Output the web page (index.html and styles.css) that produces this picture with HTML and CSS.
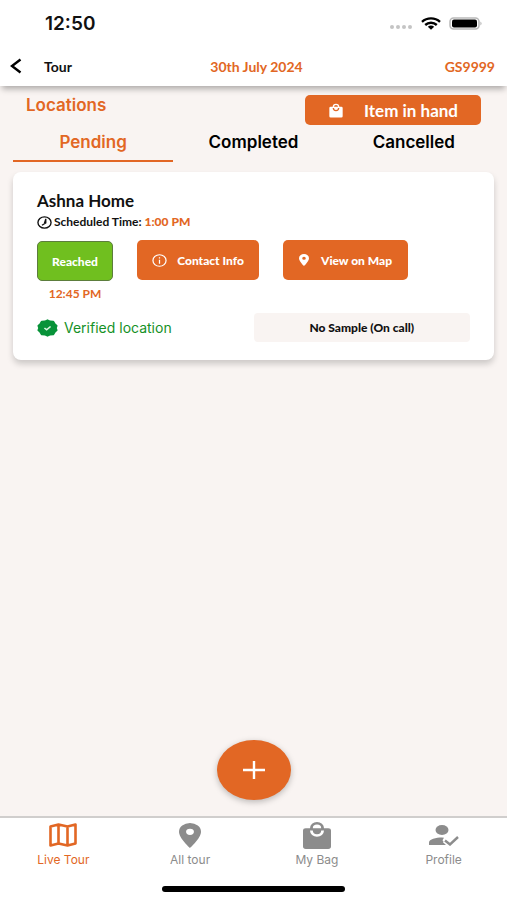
FILE: index.html
```html
<!DOCTYPE html>
<html lang="en">
<head>
    <meta charset="UTF-8">
    <meta name="viewport" content="width=device-width, initial-scale=1.0">
    <title>Tour</title>
    <link rel="stylesheet" href="styles.css">
</head>
<body>
    <div class="status-bar">
        <span class="clock">12:50</span>
        <div class="status-icons">
            <svg width="24" height="6" viewBox="0 0 24 6" fill="#c4c4c4">
                <circle cx="3" cy="3" r="2"/><circle cx="9" cy="3" r="2"/><circle cx="15" cy="3" r="2"/><circle cx="21" cy="3" r="2"/>
            </svg>
            <svg class="wifi" width="20" height="13" viewBox="0 0 20 13" fill="none" stroke="#000" stroke-width="2.4">
                <path d="M1 4.800C6 .2 14 .2 19 4.800M4.200 8C7.500 5 12.500 5 15.800 8"/>
                <path d="M6.800 9.700Q10 7.200 13.200 9.700L10 12.800z" fill="#000" stroke="none"/>
            </svg>
            <svg width="34" height="13" viewBox="0 0 34 13">
                <rect x="1" y="1" width="29" height="11" rx="3.500" fill="#fff" stroke="#b9b9b9" stroke-width="1.500"/>
                <rect x="3" y="2.500" width="25" height="8" rx="2" fill="#000"/>
                <path d="M31.500 4.500q2 2 0 4z" fill="#a5a5a5"/>
            </svg>
        </div>
    </div>

    <header class="header">
        <div class="header-left">
            <button class="back" aria-label="Back">
                <svg width="12" height="16" viewBox="0 0 12 16" fill="none" stroke="#000" stroke-width="2.400"><path d="M10.500 1.500L2 8l8.500 6.500"/></svg>
            </button>
            <h1>Tour</h1>
        </div>
        <span class="date">30th July 2024</span>
        <span class="code">GS9999</span>
    </header>

    <main>
        <div class="title-row">
            <h2>Locations</h2>
            <button class="btn item-btn">
                <svg width="16" height="15" viewBox="0 0 24 24" preserveAspectRatio="none" fill="#fff"><path d="M20 6h-3a5 5 0 0 0-10 0H4a2 2 0 0 0-2 2v13a2 2 0 0 0 2 2h16a2 2 0 0 0 2-2V8a2 2 0 0 0-2-2zm-8-3a3 3 0 0 1 3 3H9a3 3 0 0 1 3-3zm0 10a5 5 0 0 1-5-5h2a3 3 0 0 0 6 0h2a5 5 0 0 1-5 5z"/></svg>
                Item in hand
            </button>
        </div>

        <div class="tabs">
            <button class="tab active">Pending</button>
            <button class="tab">Completed</button>
            <button class="tab">Cancelled</button>
        </div>

        <section class="card">
            <h3>Ashna Home</h3>
            <p class="schedule">
                <svg width="15" height="13" viewBox="0 0 24 24" preserveAspectRatio="none" fill="none" stroke="#111" stroke-width="2.200"><circle cx="12" cy="12" r="10.500"/><path d="M14 5v8l-6 4M14 6l-2 7"/></svg>
                <span>Scheduled Time: <b>1:00 PM</b></span>
            </p>
            <div class="actions">
                <div class="reached">
                    <button class="btn reached-btn">Reached</button>
                    <span>12:45 PM</span>
                </div>
                <button class="btn contact-btn">
                    <svg width="15" height="13" viewBox="0 0 24 24" preserveAspectRatio="none" fill="none" stroke="#fff" stroke-width="2"><circle cx="12" cy="12" r="10.500"/><path d="M12 10.500V18M12 6v2.500"/></svg>
                    Contact Info
                </button>
                <button class="btn map-btn">
                    <svg width="10" height="12" viewBox="5 2 14 20" preserveAspectRatio="none" fill="#fff"><path d="M12 2a7 7 0 0 0-7 7c0 5.250 7 13 7 13s7-7.750 7-13a7 7 0 0 0-7-7zm0 9.500a2.500 2.500 0 1 1 0-5 2.500 2.500 0 0 1 0 5z"/></svg>
                    View on Map
                </button>
            </div>
            <div class="card-footer">
                <div class="verified">
                    <svg width="21" height="18" viewBox="0 0 24 24" preserveAspectRatio="none">
                        <path fill="#089339" stroke="#089339" stroke-width="2" stroke-linejoin="round" d="M12 1.500l3 1.600 3.500.2 1.600 3 2.400 2.600-.9 3.100.9 3.100-2.400 2.600-1.600 3-3.500.2-3 1.600-3-1.600-3.500-.2-1.600-3-2.400-2.600.9-3.100-.9-3.100 2.400-2.600 1.600-3 3.500-.2z"/>
                        <path d="M8.500 12l2.500 2.400 4.500-4.500" fill="none" stroke="#d8f3df" stroke-width="1.800"/>
                    </svg>
                    Verified location
                </div>
                <div class="sample">No Sample (On call)</div>
            </div>
        </section>

        <button class="fab" aria-label="Add">
            <svg width="22" height="18" viewBox="0 0 22 18" fill="none" stroke="#fff" stroke-width="2.400"><path d="M0 9h22M11 0v18"/></svg>
        </button>
    </main>

    <nav class="bottom-nav">
        <a href="#" class="active">
            <svg width="28" height="24" viewBox="0 0 28 24" fill="none" stroke="#e26724" stroke-width="2.600" stroke-linejoin="round"><path d="M1.500 3.500L9.500 1.500l9 2 8-2v19l-8 2-9-2-8 2zM9.500 1.500v19M18.500 3.500v19"/></svg>
            Live Tour
        </a>
        <a href="#">
            <svg width="22" height="25" viewBox="5 2 14 20" preserveAspectRatio="none" fill="#8c8c8c"><path d="M12 2a7 7 0 0 0-7 7c0 5.250 7 13 7 13s7-7.750 7-13a7 7 0 0 0-7-7zm0 9.500a2.500 2.500 0 1 1 0-5 2.500 2.500 0 0 1 0 5z"/></svg>
            All tour
        </a>
        <a href="#">
            <svg width="28" height="27" viewBox="2 1 20 22" preserveAspectRatio="none" fill="#8c8c8c"><path d="M20 6h-3a5 5 0 0 0-10 0H4a2 2 0 0 0-2 2v13a2 2 0 0 0 2 2h16a2 2 0 0 0 2-2V8a2 2 0 0 0-2-2zm-8-3a3 3 0 0 1 3 3H9a3 3 0 0 1 3-3zm0 10a5 5 0 0 1-5-5h2a3 3 0 0 0 6 0h2a5 5 0 0 1-5 5z"/></svg>
            My Bag
        </a>
        <a href="#">
            <svg width="30" height="21" viewBox="0 0 30 21" fill="#8c8c8c"><ellipse cx="13" cy="5" rx="6.500" ry="5"/><path d="M0 20v-2.500C0 14 7 12.500 13 12.500l2 .2-1.500 2.500L17 20z"/><path d="M15.500 15.500l5.500 4 8.500-7.500" fill="none" stroke="#fff" stroke-width="5"/><path d="M16 15.500l5 4 8-7.500" fill="none" stroke="#8c8c8c" stroke-width="2.400"/></svg>
            Profile
        </a>
    </nav>
    <div class="home-bar"></div>
</body>
</html>
```

FILE: styles.css
```css
* { box-sizing: border-box; }
body { margin: 0; min-height: 100vh; display: flex; flex-direction: column; background: #fff; color: #111; font-family: Lato, sans-serif; }
h1, h2, h3, p { margin: 0; }
button { font-family: inherit; border: none; background: none; padding: 0; color: inherit; cursor: pointer; }
svg { display: block; flex: none; }

.status-bar { display: flex; justify-content: space-between; align-items: center; height: 46px; padding: 0 24px 0 45px; }
.clock { font: 600 19px Inter, sans-serif; }
.status-icons { display: flex; align-items: center; gap: 8px; }
.status-icons svg:first-child { margin-top: 8px; }

.header { display: grid; grid-template-columns: 1fr auto 1fr; align-items: center; height: 40px; padding: 0 12px 0 10px; font-size: 14px; font-weight: 700; box-shadow: 0 5px 6px -2px rgba(0,0,0,0.3); z-index: 1; }
.header-left { display: flex; align-items: center; gap: 22px; }
.header h1 { font-size: 14px; }
.date, .code { color: #e26724; }
.date { padding-left: 8px; }
.code { text-align: right; }

main { flex: 1; display: flex; flex-direction: column; padding: 9px 13px 16px; background: #f9f4f2; }
.title-row { display: flex; justify-content: space-between; align-items: flex-start; padding: 0 13px; }
.title-row h2 { font: 600 17px/20px Inter, sans-serif; color: #e26724; }
.btn { display: flex; align-items: center; justify-content: center; height: 40px; border-radius: 5px; background: #e26724; color: #fff; font-size: 12px; font-weight: 900; }
.item-btn { width: 176px; height: 30px; gap: 20px; font-size: 17px; font-weight: 700; }

.tabs { display: grid; grid-template-columns: repeat(3, 1fr); margin-bottom: 10px; }
.tab { height: 37px; padding-bottom: 2px; border-bottom: 2px solid transparent; font: 600 17px Inter, sans-serif; color: #000; }
.tab.active { color: #e26724; border-color: #e26724; }

.card { padding: 17px 24px 18px; border-radius: 8px; background: #fff; box-shadow: 0 4px 6px rgba(0,0,0,0.18); }
.card h3 { font-size: 17px; line-height: 23px; }
.schedule { display: flex; align-items: center; gap: 2px; margin-bottom: 8px; font-size: 12px; line-height: 20px; font-weight: 700; }
.schedule b { color: #e26724; }
.actions { display: flex; gap: 24px; }
.reached { width: 76px; padding-top: 1px; text-align: center; font-size: 12px; line-height: 25px; font-weight: 700; color: #e26724; }
.reached-btn { width: 100%; background: #70bf1f; border: 1px solid #5c7d3d; }
.contact-btn { width: 122px; gap: 10px; }
.map-btn { width: 125px; gap: 12px; }
.card-footer { display: flex; justify-content: space-between; align-items: center; margin-top: 7px; }
.verified { display: flex; align-items: center; gap: 6px; font: 400 14px Inter, sans-serif; color: #159126; }
.sample { width: 50%; line-height: 29px; border-radius: 4px; background: #f9f4f2; text-align: center; font-size: 12px; font-weight: 900; }

.fab { display: flex; align-items: center; justify-content: center; align-self: center; width: 74px; height: 60px; margin-top: auto; border-radius: 50%; background: #e26724; box-shadow: 0 2px 6px rgba(0,0,0,0.25); }

.bottom-nav { display: grid; grid-template-columns: repeat(4, 1fr); height: 70px; padding-top: 3px; border-top: 2px solid #d0cecd; }
.bottom-nav a { display: grid; grid-template-rows: 28px 20px; place-items: center; align-content: start; font: 400 12px Inter, sans-serif; color: #8c8c8c; text-decoration: none; }
.bottom-nav a.active { color: #e26724; }
.home-bar { width: 36%; height: 6px; margin: 0 auto 8px; border-radius: 3px; background: #000; }
```
